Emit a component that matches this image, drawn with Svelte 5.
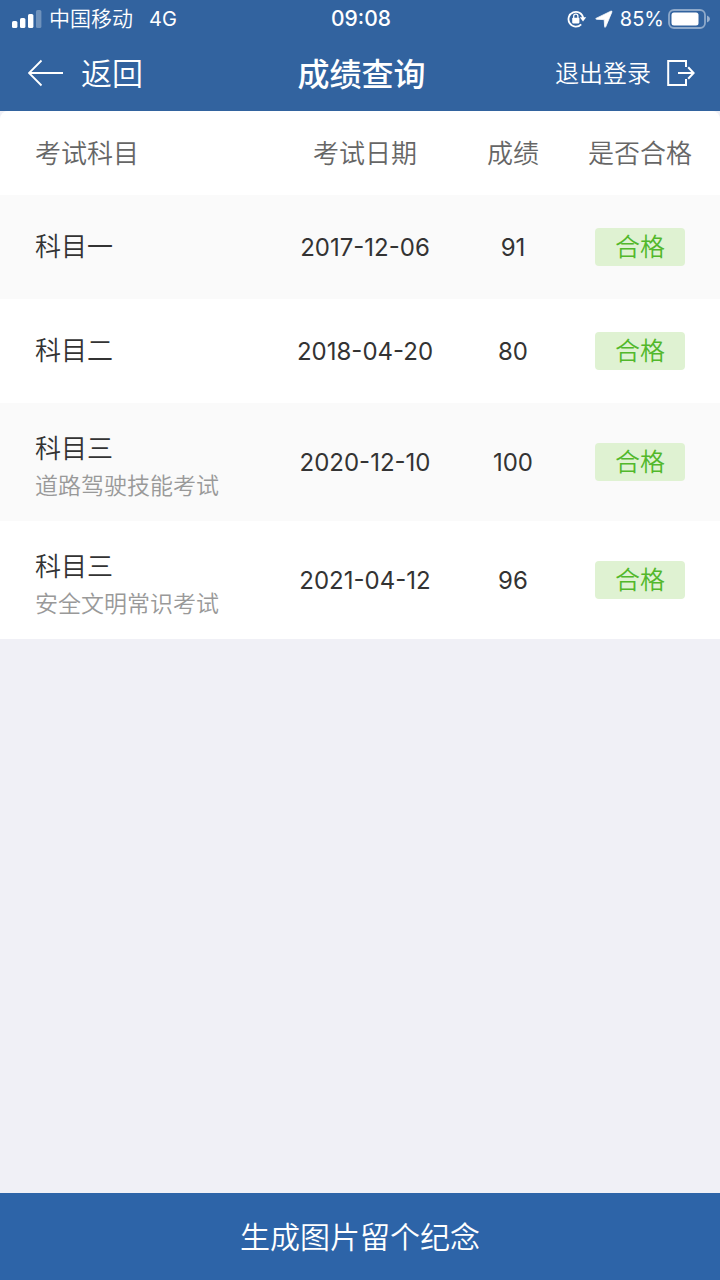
<script>
  const results = [
    { subject: '科目一', note: '', date: '2017-12-06', score: 91, verdict: '合格' },
    { subject: '科目二', note: '', date: '2018-04-20', score: 80, verdict: '合格' },
    { subject: '科目三', note: '道路驾驶技能考试', date: '2020-12-10', score: 100, verdict: '合格' },
    { subject: '科目三', note: '安全文明常识考试', date: '2021-04-12', score: 96, verdict: '合格' }
  ];
</script>

<div class="screen">
  <header>
    <div class="status">
      <div class="side">
        <svg class="signal" width="30" height="18" viewBox="0 0 30 18" aria-hidden="true">
          <rect x="0" y="11" width="5.4" height="7" rx="1.6" />
          <rect x="8" y="8" width="5.4" height="10" rx="1.6" />
          <rect x="16" y="4" width="5.4" height="14" rx="1.6" />
          <rect x="24" y="0" width="5.4" height="18" rx="1.6" opacity="0.3" />
        </svg>
        <span class="carrier">中国移动</span>
        <span class="network">4G</span>
      </div>
      <span class="clock">09:08</span>
      <div class="side end">
        <svg width="20" height="18" viewBox="0 0 20 18" aria-hidden="true">
          <path d="M14.2 14.4A7.4 7.4 0 1 1 16.2 8" fill="none" stroke="#fff" stroke-width="1.8" />
          <path d="M12.8 7.2h6.4l-3.2 4.4z" />
          <rect x="5.2" y="7.8" width="7.2" height="5.6" rx="0.8" />
          <path d="M6.7 8V6.3a2.1 2.1 0 0 1 4.2 0V8" fill="none" stroke="#fff" stroke-width="1.3" />
        </svg>
        <svg class="location" width="18" height="18" viewBox="0 0 18 18" aria-hidden="true">
          <path d="M1 8.4 15.8 1.2q1.6-.6 1 1L10.8 16.6q-.9 1.6-1.2 0L9.2 9.6 1.6 9.3q-1.4-.2-.6-.9z" stroke="#fff" stroke-width="0.8" />
        </svg>
        <span class="percent">85%</span>
        <svg width="42" height="20" viewBox="0 0 42 20" aria-hidden="true">
          <rect x="1" y="1" width="36" height="18" rx="5" fill="none" stroke="#fff" stroke-opacity="0.45" stroke-width="1.8" />
          <rect x="3.5" y="3.5" width="27" height="13" rx="2.5" />
          <path d="M39 6.5q3 1.2 3 3.5t-3 3.5z" opacity="0.5" />
        </svg>
      </div>
    </div>
    <nav>
      <button class="back" type="button">
        <svg width="36" height="28" viewBox="0 0 36 28" aria-hidden="true">
          <path d="M35 14H1M13.5 1.5 1 14l12.5 12.5" fill="none" stroke="#fff" stroke-width="1.8" />
        </svg>
        <span>返回</span>
      </button>
      <h1>成绩查询</h1>
      <button class="logout" type="button">
        <span>退出登录</span>
        <svg width="28" height="28" viewBox="0 0 28 28" aria-hidden="true">
          <path d="M19 8V2H1.2v24H19v-6M11 14h15M21.2 8.2 26.6 14l-5.4 5.8" fill="none" stroke="#fff" stroke-width="2" />
        </svg>
      </button>
    </nav>
  </header>

  <main>
    <table>
      <colgroup>
        <col />
        <col class="date-col" />
        <col class="score-col" />
        <col class="verdict-col" />
      </colgroup>
      <thead>
        <tr>
          <th scope="col">考试科目</th>
          <th scope="col">考试日期</th>
          <th scope="col">成绩</th>
          <th scope="col">是否合格</th>
        </tr>
      </thead>
      <tbody>
        {#each results as row}
          <tr class:tall={row.note}>
            <td>
              <div class="subject">{row.subject}</div>
              {#if row.note}<div class="note">{row.note}</div>{/if}
            </td>
            <td>{row.date}</td>
            <td>{row.score}</td>
            <td><span class="badge">{row.verdict}</span></td>
          </tr>
        {/each}
      </tbody>
    </table>
  </main>

  <button class="save" type="button">生成图片留个纪念</button>
</div>

<style>
  :global(body) {
    margin: 0;
    background: #f0f0f6;
  }
  .screen {
    display: flex;
    flex-direction: column;
    min-height: 100vh;
    font-family: Inter, 'Noto Sans CJK SC', sans-serif;
    color: #333;
    background: #f0f0f6;
  }
  button {
    margin: 0;
    padding: 0;
    border: 0;
    background: none;
    color: inherit;
    font: inherit;
    cursor: pointer;
  }
  svg {
    display: block;
    flex: none;
    fill: #fff;
  }
  header {
    color: #fff;
    background: #32639f;
  }
  .status {
    display: grid;
    grid-template-columns: 1fr auto 1fr;
    align-items: center;
    height: 37px;
    padding: 0 10px 0 12px;
    font-size: 21px;
  }
  .side {
    display: flex;
    align-items: center;
    line-height: 30px;
  }
  .end {
    justify-content: flex-end;
  }
  .carrier {
    margin: 0 16px 0 7px;
    font-weight: 350;
  }
  .network {
    font-size: 20px;
  }
  .clock {
    font-weight: 500;
  }
  .location {
    margin: 0 7px 0 8px;
  }
  .percent {
    margin-right: 4px;
    font-size: 20px;
  }
  nav {
    display: grid;
    grid-template-columns: 1fr auto 1fr;
    align-items: center;
    height: 72px;
    padding: 0 25px 2px 28px;
  }
  nav button {
    display: flex;
    align-items: center;
    font-weight: 350;
  }
  nav span,
  h1 {
    padding-bottom: 3px;
  }
  .back {
    gap: 17px;
    justify-self: start;
    font-size: 31px;
  }
  .logout {
    gap: 16px;
    justify-self: end;
    font-size: 24px;
  }
  h1 {
    margin: 0;
    font-size: 32px;
    font-weight: 500;
  }
  main {
    flex: 1;
  }
  table {
    width: 100%;
    table-layout: fixed;
    border-collapse: collapse;
    overflow: hidden;
    border-radius: 8px 8px 0 0;
    background: #fff;
    font-size: 24px;
    text-align: center;
  }
  .date-col {
    width: 160px;
  }
  .score-col {
    width: 136px;
  }
  .verdict-col {
    width: 139px;
  }
  th,
  td {
    padding: 0;
  }
  th {
    height: 81px;
    padding-bottom: 3px;
    color: #666;
    font-size: 26px;
    font-weight: 350;
  }
  td {
    height: 104px;
  }
  .tall td {
    height: 118px;
  }
  .tall td:first-child {
    height: 110px;
    padding-top: 8px;
  }
  th:first-child,
  td:first-child {
    padding-left: 35px;
    text-align: left;
  }
  th:last-child,
  td:last-child {
    padding-right: 21px;
  }
  tbody tr:nth-child(odd) {
    background: #fafafa;
  }
  .subject {
    font-size: 26px;
    font-weight: 350;
    line-height: 40px;
  }
  .note {
    color: #999;
    font-size: 23px;
    font-weight: 350;
    line-height: 34px;
  }
  .badge {
    display: block;
    width: 90px;
    margin: 0 auto;
    border-radius: 4px;
    color: #52b82b;
    background: #dff2d2;
    font-size: 25px;
    font-weight: 350;
    line-height: 38px;
  }
  .save {
    height: 87px;
    padding-bottom: 3px;
    color: #fff;
    background: #2d64a8;
    font-size: 30px;
    font-weight: 350;
  }
</style>
